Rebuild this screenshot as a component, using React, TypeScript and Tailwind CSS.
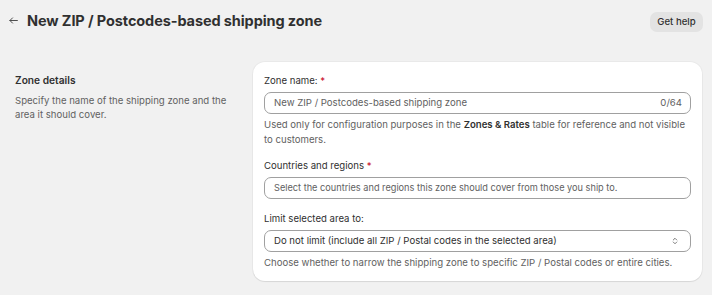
import React from 'react';

const Required = () => <span className="text-[#c70a24]">*</span>;

export default function App() {
  return (
    <div
      className="w-[712px] h-[295px] bg-[#f1f1f1] text-[#303030] overflow-hidden"
      style={{ fontFamily: 'Inter, "Noto Sans", sans-serif' }}
    >
      {/* Header */}
      <div className="flex items-center justify-between pl-[7px] pr-[9px] pt-[12px] h-[32px]">
        <div className="flex items-center gap-[7px] -mt-[3px]">
          <svg width="13" height="13" viewBox="0 0 20 20" fill="none" className="text-[#4a4a4a]">
            <path d="M16 10H4.5M8.5 6 4.5 10l4 4" stroke="currentColor" strokeWidth="1.5" strokeLinecap="round" strokeLinejoin="round" />
          </svg>
          <h1 className="text-[14.5px] leading-[20px] font-bold tracking-[-0.1px]">New ZIP / Postcodes-based shipping zone</h1>
        </div>
        <button className="h-[20px] w-[53px] rounded-[7px] bg-[#e3e3e3] text-[9.6px] font-medium text-[#303030]">
          Get help
        </button>
      </div>

      {/* Body */}
      <div className="flex pl-[15px] pr-[10px] pt-[30px] gap-[18px]">
        <div className="w-[220px] pt-[11px]">
          <h2 className="text-[10.2px] font-semibold leading-[14px]">Zone details</h2>
          <p className="mt-[7px] text-[9.6px] leading-[14px] text-[#616161]">
            Specify the name of the shipping zone and the area it should cover.
          </p>
        </div>

        <div className="flex-1 bg-white rounded-[12px] shadow-[0_1px_1px_rgba(0,0,0,0.08),0_0_0_1px_rgba(0,0,0,0.03)] px-[11px] pt-[12px] pb-[11px] flex flex-col">
          <label className="text-[9.6px] leading-[14px]">
            Zone name: <Required />
          </label>
          <div className="mt-[4px] h-[22px] rounded-[7px] border border-[#a0a0a0] flex items-center justify-between pl-[9px] pr-[8px] text-[9.6px] text-[#616161]">
            <span>New ZIP / Postcodes-based shipping zone</span>
            <span>0/64</span>
          </div>
          <p className="mt-[3px] text-[9.6px] leading-[15px] text-[#616161]">
            Used only for configuration purposes in the <span className="font-semibold text-[#303030]">Zones &amp; Rates</span> table for reference and not visible to customers.
          </p>

          <label className="mt-[12px] text-[9.6px] leading-[14px]">
            Countries and regions <Required />
          </label>
          <div className="mt-[4px] h-[22px] rounded-[7px] border border-[#a0a0a0] flex items-center pl-[9px] pr-[8px] text-[9.2px] text-[#616161]">
            Select the countries and regions this zone should cover from those you ship to.
          </div>

          <label className="mt-[13px] text-[9.6px] leading-[14px]">Limit selected area to:</label>
          <div className="mt-[4px] h-[22px] rounded-[7px] border border-[#a0a0a0] flex items-center justify-between pl-[9px] pr-[10px] text-[9.6px] text-[#303030]">
            <span>Do not limit (include all ZIP / Postal codes in the selected area)</span>
            <svg width="10" height="10" viewBox="0 0 20 20" fill="none" className="text-[#5a5a5a]">
              <path d="M6.5 8 10 4.5 13.5 8M6.5 12l3.5 3.5 3.5-3.5" stroke="currentColor" strokeWidth="1.6" strokeLinecap="round" strokeLinejoin="round" />
            </svg>
          </div>
          <p className="mt-[3px] text-[9.6px] leading-[15px] text-[#616161]">
            Choose whether to narrow the shipping zone to specific ZIP / Postal codes or entire cities.
          </p>
        </div>
      </div>
    </div>
  );
}
